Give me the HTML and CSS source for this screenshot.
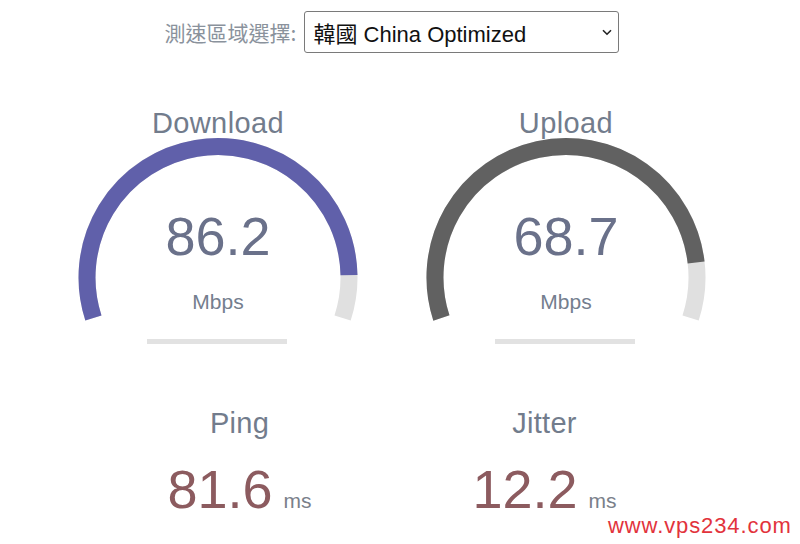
FILE: index.html
```
<!DOCTYPE html>
<html lang="zh-Hant">
<head>
<meta charset="utf-8">
<title>Speed Test</title>
<link rel="stylesheet" href="styles.css">
</head>
<body>
<div class="page">
  <div class="content">
    <div class="server-row">
      <span class="server-label">測速區域選擇:</span>
      <div class="server-select">
        <span class="server-value">韓國 China Optimized</span>
        <svg class="chevron" width="10" height="7" viewBox="0 0 10 7"><path d="M1 1.2 L5 5.2 L9 1.2" fill="none" stroke="#222" stroke-width="1.6"/></svg>
      </div>
    </div>

    <div class="gauges">
      <div class="gauge">
        <svg class="meter" width="348" height="250" viewBox="0 0 348 250">
          <path d="M49.4 218 A131 131 0 1 1 298.6 218" fill="none" stroke="#e0e0e0" stroke-width="17"/>
          <path d="M49.4 218 A131 131 0 1 1 305 175.2" fill="none" stroke="#6060aa" stroke-width="17"/>
          <rect x="103" y="239" width="140" height="5" fill="#e2e2e2"/>
        </svg>
        <div class="gauge-text">
          <div class="test-name">Download</div>
          <div class="meter-value">86.2</div>
          <div class="meter-unit">Mbps</div>
        </div>
      </div>
      <div class="gauge">
        <svg class="meter" width="348" height="250" viewBox="0 0 348 250">
          <path d="M49.4 218 A131 131 0 1 1 298.6 218" fill="none" stroke="#e0e0e0" stroke-width="17"/>
          <path d="M49.4 218 A131 131 0 1 1 304.1 162.4" fill="none" stroke="#616161" stroke-width="17"/>
          <rect x="103" y="239" width="140" height="5" fill="#e2e2e2"/>
        </svg>
        <div class="gauge-text">
          <div class="test-name">Upload</div>
          <div class="meter-value">68.7</div>
          <div class="meter-unit">Mbps</div>
        </div>
      </div>
    </div>

    <div class="stats">
      <div class="stat">
        <div class="stat-name">Ping</div>
        <div class="stat-row"><span class="stat-value">81.6</span><span class="stat-unit">ms</span></div>
      </div>
      <div class="stat">
        <div class="stat-name">Jitter</div>
        <div class="stat-row"><span class="stat-value">12.2</span><span class="stat-unit">ms</span></div>
      </div>
    </div>
  </div>

  <div class="watermark">www.vps234.com</div>
</div>
</body>
</html>
```
FILE: styles.css
```
html, body {
  margin: 0;
  padding: 0;
  background: #ffffff;
}
body {
  font-family: "Liberation Sans", "Noto Sans CJK TC", Arial, sans-serif;
}
.page {
  position: relative;
  width: 800px;
  height: 544px;
  overflow: hidden;
}
.content {
  width: 784px;
}
.server-row {
  display: flex;
  justify-content: center;
  align-items: center;
  gap: 8px;
  padding-top: 11px;
}
.server-label {
  font-family: "Noto Sans CJK TC", sans-serif;
  font-size: 21px;
  color: #8a929c;
}
.server-select {
  box-sizing: border-box;
  width: 315px;
  height: 42px;
  border: 1px solid #7a7a7a;
  border-radius: 3px;
  display: flex;
  align-items: center;
  justify-content: space-between;
  padding: 0 6px 0 8px;
}
.server-value {
  font-family: "Liberation Sans", "Noto Sans CJK TC", sans-serif;
  font-size: 22px;
  color: #111;
}
.chevron {
  display: block;
}
.gauges {
  display: flex;
  justify-content: center;
  margin-top: 47px;
}
.gauge {
  display: grid;
  width: 348px;
  height: 250px;
}
.gauge > * {
  grid-area: 1 / 1;
}
.meter {
  display: block;
}
.gauge-text {
  display: flex;
  flex-direction: column;
  align-items: center;
  padding-top: 6px;
}
.test-name {
  font-size: 29px;
  line-height: 34px;
  letter-spacing: 0.4px;
  color: #727c8c;
}
.meter-value {
  font-size: 54px;
  line-height: 60px;
  margin-top: 66px;
  color: #6a718a;
}
.meter-unit {
  font-size: 21px;
  line-height: 24px;
  margin-top: 24px;
  color: #747e8e;
}
.stats {
  display: flex;
  justify-content: center;
  padding-top: 56px;
}
.stat {
  width: 305px;
  display: flex;
  flex-direction: column;
  align-items: center;
}
.stat-name {
  font-size: 29px;
  line-height: 34px;
  letter-spacing: 0.3px;
  color: #727c8c;
}
.stat-row {
  display: flex;
  align-items: baseline;
  gap: 11px;
  margin-top: 19px;
  line-height: 60px;
}
.stat-value {
  font-size: 54px;
  color: #8c5b5f;
}
.stat-unit {
  font-size: 21px;
  color: #7a808a;
}
.watermark {
  position: absolute;
  left: 608px;
  top: 513px;
  font-size: 22px;
  line-height: 25px;
  letter-spacing: 0.9px;
  color: #e2333c;
  white-space: nowrap;
}
```
